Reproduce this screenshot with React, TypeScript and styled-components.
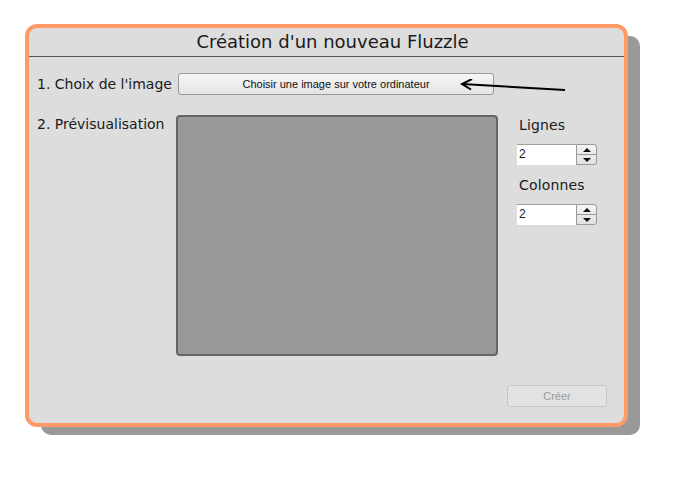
import styled, { createGlobalStyle } from "styled-components";

const GlobalStyle = createGlobalStyle`
  html, body {
    margin: 0;
    padding: 0;
    background: #ffffff;
  }
  body {
    font-family: "DejaVu Sans", Verdana, sans-serif;
    color: #1a1a1a;
  }
`;

const Page = styled.div`
  width: 673px;
  height: 484px;
  padding: 24px 0 0 25px;
  box-sizing: border-box;
`;

const Card = styled.div`
  width: 603px;
  height: 403px;
  box-sizing: border-box;
  border: 4px solid #ff9966;
  border-radius: 12px;
  background: #dddddd;
  box-shadow: 14px 10px 0 -2px #999999;
  display: flex;
  flex-direction: column;
`;

const Title = styled.h1`
  margin: 0;
  height: 28px;
  line-height: 28px;
  padding-left: 12px;
  border-bottom: 1px solid #555555;
  text-align: center;
  font-size: 18px;
  font-weight: normal;
`;

const Body = styled.div`
  padding: 16px 0 0 8px;
  display: grid;
  grid-template-columns: 139px 324px 1fr;
  row-gap: 20px;
`;

const Label = styled.div<{ $top?: number }>`
  font-size: 14px;
  align-self: ${(p) => (p.$top !== undefined ? "start" : "center")};
  padding-top: ${(p) => p.$top ?? 0}px;
  white-space: nowrap;
`;

const PickRow = styled.div`
  grid-column: 2 / 4;
  position: relative;
  display: flex;
  align-items: center;
  padding-left: 2px;
`;

const Button = styled.button`
  width: 316px;
  height: 22px;
  padding: 0;
  border: 1px solid #9a9a9a;
  border-radius: 3px;
  background: linear-gradient(#f6f6f6, #e4e4e4);
  font-family: "Liberation Sans", Arial, sans-serif;
  font-size: 11px;
  color: #111111;
`;

const Arrow = styled.svg`
  position: absolute;
  left: 283px;
  top: 6px;
`;

const Preview = styled.div`
  width: 322px;
  height: 241px;
  box-sizing: border-box;
  border: 2px solid #666666;
  border-radius: 4px;
  background: #999999;
`;

const Side = styled.div`
  padding: 2px 0 0 17px;
  display: flex;
  flex-direction: column;
  align-items: flex-start;
`;

const SideLabel = styled.div`
  font-size: 14px;
  line-height: 17px;
  letter-spacing: 0.15px;
  margin: 0 0 10px 2px;
`;

const Spin = styled.div`
  display: flex;
  height: 21px;
  margin-bottom: 12px;
`;

const SpinInput = styled.div`
  width: 59px;
  box-sizing: border-box;
  background: #ffffff;
  border-top: 1px solid #a0a0a0;
  padding: 2px 0 0 2px;
  font-family: "Liberation Sans", Arial, sans-serif;
  font-size: 12px;
`;

const SpinButtons = styled.div`
  width: 21px;
  box-sizing: border-box;
  border: 1px solid #9a9a9a;
  border-radius: 0 3px 3px 0;
  background: linear-gradient(#f4f4f4, #e2e2e2);
  display: flex;
  flex-direction: column;
`;

const SpinHalf = styled.div<{ $down?: boolean }>`
  flex: 1;
  display: flex;
  align-items: center;
  justify-content: center;
  border-top: ${(p) => (p.$down ? "1px solid #9a9a9a" : "none")};
`;

const Tri = styled.div<{ $down?: boolean }>`
  width: 0;
  height: 0;
  border-left: 4px solid transparent;
  border-right: 4px solid transparent;
  ${(p) =>
    p.$down ? "border-top: 4px solid #111;" : "border-bottom: 4px solid #111;"}
`;

const Footer = styled.div`
  margin-top: auto;
  display: flex;
  justify-content: flex-end;
  padding: 0 17px 16px 0;
`;

const CreateButton = styled.button`
  width: 100px;
  height: 22px;
  padding: 0;
  border: 1px solid #c6c6c6;
  border-radius: 3px;
  background: #e2e2e2;
  color: #9a9a9a;
  font-family: "Liberation Sans", Arial, sans-serif;
  font-size: 11px;
`;

function SpinBox({ value }: { value: number }) {
  return (
    <Spin>
      <SpinInput>{value}</SpinInput>
      <SpinButtons>
        <SpinHalf>
          <Tri />
        </SpinHalf>
        <SpinHalf $down>
          <Tri $down />
        </SpinHalf>
      </SpinButtons>
    </Spin>
  );
}

export default function App() {
  return (
    <>
      <GlobalStyle />
      <Page>
        <Card>
          <Title>Création d'un nouveau Fluzzle</Title>
          <Body>
            <Label>1. Choix de l'image</Label>
            <PickRow>
              <Button>Choisir une image sur votre ordinateur</Button>
              <Arrow width="110" height="16" viewBox="0 0 110 16">
                <path
                  d="M3 5 L106 11"
                  stroke="#000"
                  strokeWidth="2"
                  fill="none"
                />
                <path
                  d="M13 0 L3 5 L12 10.5"
                  stroke="#000"
                  strokeWidth="2"
                  fill="none"
                />
              </Arrow>
            </PickRow>
            <Label $top={1}>2. Prévisualisation</Label>
            <Preview />
            <Side>
              <SideLabel>Lignes</SideLabel>
              <SpinBox value={2} />
              <SideLabel>Colonnes</SideLabel>
              <SpinBox value={2} />
            </Side>
          </Body>
          <Footer>
            <CreateButton>Créer</CreateButton>
          </Footer>
        </Card>
      </Page>
    </>
  );
}
